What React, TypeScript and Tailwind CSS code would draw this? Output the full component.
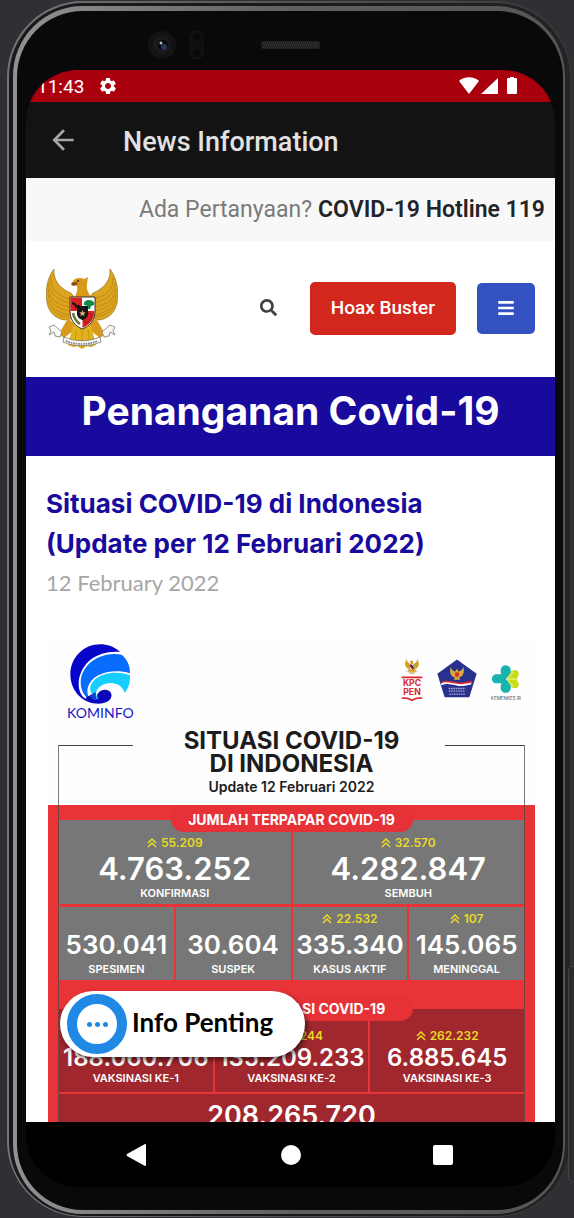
import type { ReactNode } from "react";
import { FaBars, FaSearch } from "react-icons/fa";
import { MdArrowBack, MdSettings } from "react-icons/md";

function Garuda({ className }: { className: string }) {
  return (
    <svg viewBox="0 0 72 81" className={className} role="img" aria-label="Garuda Pancasila">
      <g fill="#dca51d" stroke="#8a6a1c" strokeWidth="0.6">
        <path d="M8 1C1 10-1 23 1 35c2 10 9 16 18 17l10-2V30l-4-5C15 21 7 13 8 1Z" />
        <path d="M64 1c7 9 9 22 7 34-2 10-9 16-18 17l-10-2V30l4-5C57 21 65 13 64 1Z" />
      </g>
      <g fill="none" stroke="#a87a18" strokeWidth="0.6">
        <path d="M5 9c-1 11 5 18 18 22M3 15c0 10 7 16 20 20M2 21c1 10 8 15 21 18M2 27c2 9 9 13 21 16M2 33c3 8 10 11 21 14M5 40c4 6 10 8 18 9" />
        <path d="M67 9c1 11-5 18-18 22M69 15c0 10-7 16-20 20M70 21c-1 10-8 15-21 18M70 27c-2 9-9 13-21 16M70 33c-3 8-10 11-21 14M67 40c-4 6-10 8-18 9" />
      </g>
      <path d="M28 31c2-5 4-8 3-13l-6-1 2-4c3-4 8-3 11-2l4-2-1 7c-1 6 2 10 6 15Z" fill="#d99a1c" />
      <path d="m25 15 5-1 2 2-5 2Z" fill="#7b4d12" />
      <circle cx="32" cy="13" r="0.9" fill="#2b1b08" />
      <path d="m22 50-9 16 5 4 14-11Zm28 0 9 16-5 4-14-11Z" fill="#d99a1c" />
      <path d="M27 57h18l5 20-5 2-4-1-5 3-5-3-4 1-5-2Z" fill="#e0b31b" />
      <path d="m30 62-1 17m7-18v19m6-18 2 17" stroke="#b98d14" strokeWidth="0.7" />
      <path d="M24 29h25v14c0 9-5 15-12.500 18C29 58 24 52 24 43Z" fill="#fff" stroke="#222" strokeWidth="0.9" />
      <path d="M24.500 29.500H36V43H24.500Zm12 13.500H48.500c0 8-5 14-12 17Z" fill="#d7231f" />
      <path d="m26 34 3 1 2 2h3v4h-2l-1-2-2 2v-3l-3-2Z" fill="#23150f" />
      <path d="M38 37c-1-3 2-5 5-5 4 0 6 3 5 5l-3 1-1 3h-2v-3Z" fill="#158744" />
      <path d="M27 45c1 5 4 9 7 11" fill="none" stroke="#677437" strokeWidth="2.500" />
      <ellipse cx="42" cy="50" rx="3" ry="5" fill="none" stroke="#a01513" transform="rotate(35 42 50)" />
      <path d="M31 38h11v7c0 4-2 6-5.500 7-3.500-1-5.500-3-5.500-7Z" fill="#171414" />
      <path d="m36.500 42 .9 2.200 2.400.2-1.800 1.500.6 2.400-2.100-1.300-2.100 1.300.6-2.400-1.800-1.500 2.400-.2Z" fill="#d8ac70" />
      <g fill="#f8f8f5" stroke="#6a6861" strokeWidth="0.7">
        <path d="m3 59 5-2 8 7-2 5-5-1-1-4-5 3 2-4Zm66 0-5-2-8 7 2 5 5-1 1-4 5 3-2-4Z" />
        <path d="M18 69c12 5 24 5 36 0l1 5c-12 5-26 5-38 0Z" />
      </g>
      <path d="M20 73c11 4 21 4 32 0" fill="none" stroke="#77756e" strokeWidth="1.700" strokeDasharray="1.500 1" />
    </svg>
  );
}

function KominfoLogo() {
  return (
    <svg viewBox="140 68 206 230" className="h-[77px] w-[69px]" role="img" aria-label="Kominfo">
      <path d="M304 97C285 78 262 72 242 72c-49 0-89 40-89 89 0 45 30 82 75 88 30 2 52-10 47-30l-60-50Z" fill="#0705c9" />
      <path d="M304 95C240 88 186 122 178 182c-2 28 8 48 24 54 20 4 40 0 60-20l75-10V110Z" fill="#fff" />
      <path d="M306 103c17 14 26 34 25 55-55-15-116 2-126 44-4 18 2 33 18 43-36-14-50-58-30-94 20-38 70-56 113-48Z" fill="#086dff" />
      <path d="M331 164c2 20-5 40-16 53-7-28-44-38-70-21-16 10-20 25-8 38-26-9-33-34-14-54 24-24 68-30 108-16Z" fill="#17cfff" />
      <path d="M200 236c24 18 73 14 75-10 1-19-22-23-36-12-11 9-6 24 8 22 10-1 13-11 6-15 18 1 15 22-5 24-19 2-31-9-28-22-12 0-24 8-20 13Z" fill="#0d08b4" />
      <path d="M210 226c4-4 12-8 20-10-3 9-1 16 5 21-10 1-20-3-25-11Z" fill="#0d3fd0" />
      <text x="243" y="291" textAnchor="middle" fontSize="42" fill="#1718c4" className="font-[Lato,sans-serif]">KOMINFO</text>
    </svg>
  );
}

function PartnerLogos() {
  return (
    <div className="flex items-start gap-[14px] pt-4">
      <div className="flex w-[22px] flex-col items-center">
        <Garuda className="h-[15px] w-4" />
        <svg viewBox="0 0 66 78" className="mt-[2px] h-[26px] w-[22px]" role="img" aria-label="KPC PEN">
          <path d="M2 4h62M2 66l18 1 13 6 13-6 18-1" fill="none" stroke="#d7292e" strokeWidth="5" />
          <text x="33" y="31" textAnchor="middle" fontSize="26" fontWeight="700" fill="#d7292e" className="font-[Inter,sans-serif]">KPC</text>
          <text x="33" y="57" textAnchor="middle" fontSize="26" fontWeight="700" fill="#d7292e" className="font-[Inter,sans-serif]">PEN</text>
        </svg>
      </div>
      <svg viewBox="0 0 120 116" className="h-[39px] w-10" role="img" aria-label="Satgas Covid-19">
        <path d="m60 1 59 43-22 70H23L1 44Z" fill="#29318e" />
        <path d="M12 70c15-10 31-2 47-1 16 2 31-1 47-4l-2 7c-18 3-32 8-47 5-16-2-30-7-46 0Z" fill="#d8292d" />
        <path d="M12 73c16-8 32-1 48 1 14 3 29-1 44-3l-2 5c-14 3-28 7-43 3-15-3-29-8-45-1Z" fill="#fff" />
        <path d="M41 23c-5 20 2 30 13 32l-4 7h20l-4-7c12-2 18-14 13-32-2 9-9 14-15 14l-4-9-5 9c-7 0-12-6-14-14Z" fill="#d9a93b" />
        <path d="M54 40h12v8l-6 7-6-7Z" fill="#d92c2b" />
        <path d="M35 88h50M35 96h50M37 105h47" stroke="#a6a9d3" strokeWidth="4" strokeDasharray="5 2" />
      </svg>
      <svg viewBox="0 0 90 110" className="mt-[6px] h-9 w-[30px]" role="img" aria-label="Kemenkes RI">
        <path d="M46 43 31 30C25 14 31 1 44 1s19 13 14 27ZM46 43 31 56H16C6 56 2 50 2 43s4-15 14-15h15ZM46 43 31 56c-6 16 0 29 13 29s19-13 14-27Z" fill="#17b3ad" />
        <path d="m46 43 12-18c4-7 8-10 15-10 13 0 14 17 6 22L66 43l13 6c8 5 7 22-6 22-7 0-11-3-15-10Z" fill="#c9dc18" />
        <path d="M46 43 80 30v26Z" fill="#c9dc18" />
        <path d="M46 43h36M46 43l22-22M46 43l22 22" stroke="#fff" strokeWidth="2" />
        <text x="45" y="108" textAnchor="middle" fontSize="14" fill="#53565a" className="font-[Inter,sans-serif]">KEMENKES RI</text>
      </svg>
    </div>
  );
}

function Delta({ children }: { children: ReactNode }) {
  return (
    <span className="flex h-4 items-center justify-center gap-1 text-[12px] leading-4 font-semibold text-[#eadb25]">
      <svg viewBox="0 0 10 10" className="size-[10px]" fill="none" stroke="currentColor" strokeWidth="1.500" aria-hidden="true">
        <path d="m1 5 4-4 4 4M1 9l4-4 4 4" />
      </svg>
      {children}
    </span>
  );
}

type Stat = { value: string; label: string; delta?: string };

function StatCell({ stat, tone, number }: { stat: Stat; tone: string; number: string }) {
  return (
    <div className={`flex flex-col items-center whitespace-nowrap text-white ${tone}`}>
      {stat.delta ? <Delta>{stat.delta}</Delta> : <span className="h-4" />}
      <span className={`font-semibold ${number}`}>{stat.value}</span>
      <span className="text-[11px] leading-3 font-semibold">{stat.label}</span>
    </div>
  );
}

const totals: Stat[] = [
  { value: "4.763.252", label: "KONFIRMASI", delta: "55.209" },
  { value: "4.282.847", label: "SEMBUH", delta: "32.570" },
];
const cases: Stat[] = [
  { value: "530.041", label: "SPESIMEN" },
  { value: "30.604", label: "SUSPEK" },
  { value: "335.340", label: "KASUS AKTIF", delta: "22.532" },
  { value: "145.065", label: "MENINGGAL", delta: "107" },
];
const vaccines: Stat[] = [
  { value: "188.060.706", label: "VAKSINASI KE-1" },
  { value: "135.209.233", label: "VAKSINASI KE-2", delta: "798.244" },
  { value: "6.885.645", label: "VAKSINASI KE-3", delta: "262.232" },
];

function Ribbon({ children }: { children: ReactNode }) {
  return (
    <div className="relative z-10 mx-auto -mb-3 flex h-[26px] w-[242px] items-center justify-center rounded-full bg-[#e63137] text-[14px] font-bold whitespace-nowrap text-white">
      {children}
    </div>
  );
}

function Infographic() {
  return (
    <figure className="mt-[34px] ml-[2px] bg-[#fefefe] font-[Inter,sans-serif]">
      <div className="flex items-start justify-between pt-[5px] pr-[14px] pl-[18px]">
        <KominfoLogo />
        <PartnerLogos />
      </div>
      <div className="relative mt-[9px]">
        <div className="pointer-events-none absolute top-[16px] right-[10px] bottom-0 left-[10px] z-20 border-x border-[#444]/70">
          <div className="flex justify-between">
            <span className="w-[74px] border-t border-[#444]" />
            <span className="w-[79px] border-t border-[#444]" />
          </div>
        </div>
        <figcaption className="pb-[6px] text-center text-[#1c1c1c]">
          <h3 className="text-[24px] leading-[23px] font-bold">
            SITUASI COVID-19
            <br />
            DI INDONESIA
          </h3>
          <p className="text-[14px] leading-6 font-semibold">Update 12 Februari 2022</p>
        </figcaption>
        <div className="bg-[#e93437] px-[11px] pt-px">
          <Ribbon>JUMLAH TERPAPAR COVID-19</Ribbon>
          <div className="grid grid-cols-2 gap-x-[2px]">
            {totals.map((s) => (
              <StatCell key={s.label} stat={s} number="text-[31px] leading-9" tone="bg-[#777777] h-[84px] pt-[15px]" />
            ))}
          </div>
          <div className="mt-[3px] grid grid-cols-4 gap-x-[2px]">
            {cases.map((s) => (
              <StatCell key={s.label} stat={s} number="text-[26px] leading-9" tone="bg-[#777777] h-[73px] pt-[4px]" />
            ))}
          </div>
          <div className="pt-[15px]">
            <Ribbon>DATA VAKSINASI COVID-19</Ribbon>
          </div>
          <div className="grid grid-cols-3 gap-x-[2px]">
            {vaccines.map((s) => (
              <StatCell key={s.label} stat={s} number="text-[24px] leading-7" tone="bg-[#9f272d] h-[83px] pt-[19px]" />
            ))}
          </div>
          <div className="mt-[2px] bg-[#9f272d] pt-[6px] pb-8 text-center text-[27px] leading-8 font-semibold text-white">
            208.265.720
          </div>
        </div>
      </div>
    </figure>
  );
}

function StatusBar() {
  return (
    <div className="flex h-8 shrink-0 items-center justify-between bg-[#aa000d] pr-[37px] pl-[11px] text-white">
      <div className="flex items-center gap-[14px]">
        <span className="pt-px text-[19px] leading-8">11:43</span>
        <MdSettings size={20} aria-label="Settings" />
      </div>
      <svg viewBox="0 0 59 18" className="h-[18px] w-[59px]" fill="currentColor" role="img" aria-label="Wi-Fi, signal and battery">
        <path d="M0 4C5-1 15-1 20 4L10 17ZM22 17 39 1v16ZM48 2q0-1 1-1h2V0h4v1h2q1 0 1 1v14q0 1-1 1h-8q-1 0-1-1Z" />
      </svg>
    </div>
  );
}

function WebPage() {
  return (
    <main className="h-full overflow-hidden bg-white">
      <p className="flex h-[63px] items-center justify-end gap-[6px] bg-[#f8f8f8] pt-[2px] pr-[10px] text-[23px] whitespace-nowrap text-[#7a7a7a]">
        Ada Pertanyaan? <strong className="font-semibold text-[#212529]">COVID-19 Hotline 119</strong>
      </p>
      <header className="flex h-[136px] items-center justify-between px-5 pb-[2px]">
        <a href="#beranda">
          <Garuda className="h-[81px] w-[72px]" />
        </a>
        <div className="flex items-center">
          <button type="button" aria-label="Cari" className="mr-[33px] pb-[2px] text-[#404040]">
            <FaSearch size={17} />
          </button>
          <button type="button" className="mr-[21px] h-[53px] rounded-[5px] bg-[#d1271c] px-[21px] text-[19px] font-medium whitespace-nowrap text-white">
            Hoax Buster
          </button>
          <button type="button" aria-label="Menu" className="flex h-[51px] w-[58px] items-center justify-center rounded-[5px] bg-[#3351c1] text-white">
            <FaBars size={18} />
          </button>
        </div>
      </header>
      <div className="h-[79px] bg-[#190a9e] pt-2 text-center font-[Inter,sans-serif] text-[39px] leading-[52px] font-bold whitespace-nowrap text-white">
        Penanganan Covid-19
      </div>
      <article className="px-5 pt-7">
        <h2 className="font-[Inter,sans-serif] text-[26px] leading-10 font-bold text-[#190a9e]">
          Situasi COVID-19 di Indonesia
          <br />
          (Update per 12 Februari 2022)
        </h2>
        <p className="font-[Lato,sans-serif] text-[22px] leading-[38px] text-[#a6a6a6]">12 February 2022</p>
        <div className="pt-[2px]">
          <Infographic />
        </div>
      </article>
    </main>
  );
}

function CameraStrip() {
  return (
    <div className="grid h-[59px] shrink-0 grid-cols-[1fr_auto_1fr] items-center pt-2">
      <svg viewBox="0 0 58 30" className="mr-[56px] h-[30px] w-[58px] justify-self-end" aria-hidden="true">
        <circle cx="15" cy="15" r="14" fill="#131315" />
        <circle cx="15" cy="15" r="9" fill="#1a1a1c" />
        <circle cx="16" cy="15" r="5" fill="#08080c" />
        <circle cx="17" cy="17" r="3" fill="#27345d" />
        <circle cx="14" cy="13" r="1.500" fill="#b4b5bd" />
        <rect x="43" y="1" width="13" height="28" rx="6" fill="#0f0f10" stroke="#151516" />
        <circle cx="49.500" cy="7" r="5" fill="#09090a" stroke="#171718" />
        <circle cx="49.500" cy="23" r="5" fill="#09090a" stroke="#171718" />
      </svg>
      <svg viewBox="0 0 59 8" className="h-2 w-[59px]" aria-hidden="true">
        <rect width="59" height="8" rx="2" fill="#1f1f20" />
        <path d="M2 2h55M3 4h54M2 6h55" stroke="#3c3c3d" strokeDasharray="1 1" />
      </svg>
    </div>
  );
}

export default function App() {
  return (
    <div className="relative h-screen overflow-hidden bg-[#2f3033] pt-px pr-[3px] pb-px pl-[7px] font-[Roboto,sans-serif]">
      <div className="relative h-full rounded-[76px] bg-linear-to-r from-[#727477] to-[#37383a] pt-[2px] pr-px pb-px pl-[2px]">
        <div className="h-full rounded-[74px] bg-linear-to-r from-[#19191b] via-[#19191b] to-[#232424] pt-[3px] pr-[5px] pb-[2px] pl-1">
          <div className="h-full rounded-[70px] bg-linear-to-r from-[#929292] via-[#606060] to-[#555555] pt-[5px] pr-[2px] pb-1 pl-1">
            <div className="flex h-full flex-col rounded-[66px] bg-[#09090b] pr-2 pb-[23px] pl-[9px]">
              <CameraStrip />
              <div className="flex min-h-0 flex-1 flex-col overflow-hidden rounded-[52px] bg-black">
                <StatusBar />
                <div className="flex h-[76px] shrink-0 items-center bg-[#131313] pl-[21px] text-[#e2e2e2]">
                  <button type="button" aria-label="Back" className="mr-11 text-[#a5a5a5]">
                    <MdArrowBack size={32} />
                  </button>
                  <h1 className="pt-1 text-[27px] font-medium whitespace-nowrap">News Information</h1>
                </div>
                <div className="relative min-h-0 flex-1">
                  <WebPage />
                  <button type="button" className="absolute bottom-[65px] left-[34px] z-30 flex h-[66px] w-[245px] items-center gap-[5px] rounded-full bg-white pl-[7px] text-black shadow-[2px_3px_5px_rgba(0,0,0,0.55)]">
                    <span className="flex size-[60px] items-center justify-center gap-[3px] rounded-full border-10 border-[#2088e5]">
                      <span className="size-[5px] rounded-full bg-[#2088e5]" />
                      <span className="size-[5px] rounded-full bg-[#2088e5]" />
                      <span className="size-[5px] rounded-full bg-[#2088e5]" />
                    </span>
                    <span className="pb-[4px] font-[Lato,sans-serif] text-[26px] leading-8 font-bold whitespace-nowrap">Info Penting</span>
                  </button>
                </div>
                <nav className="flex h-[65px] shrink-0 items-center justify-between px-[100px] text-white">
                  <button type="button" aria-label="Back">
                    <svg viewBox="0 0 22 22" className="size-[22px]" fill="currentColor"><path d="M19 0 1 10q-1 1 0 2l18 10q1 0 1-1V1q0-1-1-1Z" /></svg>
                  </button>
                  <button type="button" aria-label="Home" className="size-5 rounded-full bg-white" />
                  <button type="button" aria-label="Overview" className="mr-[2px] size-5 rounded-xs bg-white" />
                </nav>
              </div>
            </div>
          </div>
        </div>
      </div>
      <div className="absolute top-[966px] -right-1 h-[216px] w-[10px] rounded-md border border-[#454547] bg-[#2b2b2b]" />
    </div>
  );
}
